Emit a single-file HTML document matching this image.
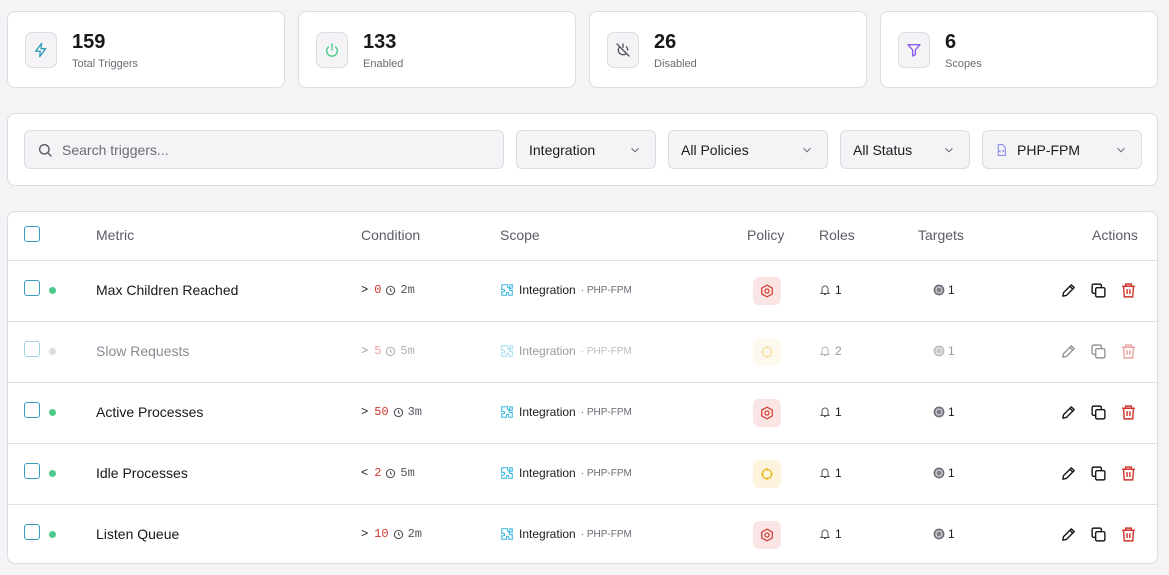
<!DOCTYPE html>
<html><head><meta charset="utf-8"><style>
*{box-sizing:border-box;margin:0;padding:0}
body{width:1169px;height:575px;background:#f4f4f6;font-family:"Liberation Sans",sans-serif;color:#1b1b1f;position:relative;overflow:hidden}
.card{position:absolute;top:11px;height:77px;width:278px;background:#fff;border:1px solid #dcdce2;border-radius:8px}
.ib{position:absolute;left:17px;top:20px;width:32px;height:36px;border:1px solid #dcdce2;border-radius:7px;background:#f4f4f6;display:flex;align-items:center;justify-content:center}
.num{position:absolute;left:64px;top:19px;font-size:20px;font-weight:bold;color:#18181b}
.lbl{position:absolute;left:64px;top:46px;font-size:11px;color:#6b6b76}
.panel{position:absolute;left:7px;top:113px;width:1151px;height:73px;background:#fff;border:1px solid #dcdce2;border-radius:8px}
.inp{position:absolute;top:130px;height:39px;background:#f4f4f6;border:1px solid #dcdce2;border-radius:6px;font-size:14px;color:#1b1b1f;display:flex;align-items:center;padding-left:12px}
.chev{position:absolute;right:13px;top:12px}
.table{position:absolute;left:7px;top:211px;width:1151px;height:353px;background:#fff;border:1px solid #dcdce2;border-radius:8px;overflow:hidden}
.th{position:absolute;top:15px;font-size:14px;color:#5b5b66}
.row{position:absolute;left:0;width:1151px;height:61px;border-top:1px solid #e0e0e6}
.cb{position:absolute;left:16px;top:19px;width:16px;height:16px;border:1.5px solid #3a9bbd;border-radius:3px}
.dot{position:absolute;left:41px;top:26px;width:7px;height:7px;border-radius:50%;background:#4cc98a}
.name{position:absolute;left:88px;top:21px;font-size:14px;color:#18181b}
.cond{position:absolute;left:353px;top:22px;font-family:"Liberation Mono",monospace;font-size:12px;display:flex;align-items:center;gap:4px;color:#1b1b1f}
.cond .v{color:#d1352b;margin-left:2px}
.cond .t{color:#55555f}
.scope{position:absolute;left:492px;top:22px;font-size:12px;display:flex;align-items:center;gap:5px}
.scope .s{font-size:10px;color:#6b6b76}
.pol{position:absolute;left:745px;top:16px;width:28px;height:28px;border-radius:6px;display:flex;align-items:center;justify-content:center}
.roles{position:absolute;left:811px;top:22px;font-size:12px;display:flex;align-items:center;gap:4px}
.tg{position:absolute;left:925px;top:22px;font-size:12px;display:flex;align-items:center;gap:3px}
.act{position:absolute;left:1052px;top:21px;display:flex;gap:13px}
.dim{opacity:.45}
</style></head><body>

<div class="card" style="left:7px"><div class="ib"><svg width="16" height="16" viewBox="0 0 24 24" fill="none" stroke="#3a9bbd" stroke-width="2" stroke-linejoin="round"><path d="M13 2L4 14h7l-1 8 9-12h-7z"/></svg></div><div class="num">159</div><div class="lbl">Total Triggers</div></div>
<div class="card" style="left:298px"><div class="ib"><svg width="16" height="16" viewBox="0 0 24 24" fill="none" stroke="#4cc98a" stroke-width="2" stroke-linecap="round"><path d="M12 3v9"/><path d="M6.5 7.5a8 8 0 1 0 11 0"/></svg></div><div class="num">133</div><div class="lbl">Enabled</div></div>
<div class="card" style="left:589px"><div class="ib"><svg width="16" height="16" viewBox="0 0 24 24" fill="none" stroke="#55555f" stroke-width="2" stroke-linecap="round"><path d="M3 3l18 18"/><path d="M12 3v5"/><path d="M7 7a7 7 0 1 0 10 10"/><path d="M17 7a7 7 0 0 1 2 5"/></svg></div><div class="num">26</div><div class="lbl">Disabled</div></div>
<div class="card" style="left:880px"><div class="ib"><svg width="16" height="16" viewBox="0 0 24 24" fill="none" stroke="#8b5cf6" stroke-width="2" stroke-linejoin="round"><path d="M3 4h18l-7 8v7l-4 2v-9z"/></svg></div><div class="num">6</div><div class="lbl">Scopes</div></div>

<div class="panel"></div>
<div class="inp" style="left:24px;width:480px;color:#6b6b76"><svg width="16" height="16" viewBox="0 0 24 24" fill="none" stroke="#55555f" stroke-width="2" stroke-linecap="round" style="margin-right:9px"><circle cx="11" cy="11" r="7"/><path d="M16 16l5 5"/></svg>Search triggers...</div>
<div class="inp" style="left:516px;width:140px">Integration<svg class="chev" width="14" height="14" viewBox="0 0 24 24" fill="none" stroke="#6b6b76" stroke-width="1.8"><path d="M6 9l6 6 6-6"/></svg></div>
<div class="inp" style="left:668px;width:160px">All Policies<svg class="chev" width="14" height="14" viewBox="0 0 24 24" fill="none" stroke="#6b6b76" stroke-width="1.8"><path d="M6 9l6 6 6-6"/></svg></div>
<div class="inp" style="left:840px;width:130px">All Status<svg class="chev" width="14" height="14" viewBox="0 0 24 24" fill="none" stroke="#6b6b76" stroke-width="1.8"><path d="M6 9l6 6 6-6"/></svg></div>
<div class="inp" style="left:982px;width:160px"><svg width="13" height="14" viewBox="0 0 24 24" fill="none" stroke="#8b8bf0" stroke-width="2" style="margin-right:9px"><path d="M6 2h8l5 5v15H6z"/><path d="M10 12l-2 2 2 2M14 12l2 2-2 2"/></svg>PHP-FPM<svg class="chev" width="14" height="14" viewBox="0 0 24 24" fill="none" stroke="#6b6b76" stroke-width="1.8"><path d="M6 9l6 6 6-6"/></svg></div>

<div class="table">
<div class="cb" style="top:14px"></div>
<div class="th" style="left:88px">Metric</div>
<div class="th" style="left:353px">Condition</div>
<div class="th" style="left:492px">Scope</div>
<div class="th" style="left:739px">Policy</div>
<div class="th" style="left:811px">Roles</div>
<div class="th" style="left:910px">Targets</div>
<div class="th" style="left:1084px">Actions</div>

<div class="row" style="top:48px">
<div class="cb"></div><div class="dot"></div><div class="name">Max Children Reached</div>
<div class="cond">&gt;<span class="v">0</span><svg width="11" height="11" viewBox="0 0 24 24" fill="none" stroke="#55555f" stroke-width="2.4"><circle cx="12" cy="12" r="9"/><path d="M12 7v5l3 2"/></svg><span class="t">2m</span></div>
<div class="scope"><svg width="14" height="14" viewBox="0 0 24 24" fill="none" stroke="#38b6e0" stroke-width="1.8"><path d="M9 3h4v3a2 2 0 1 0 4 0V3h4v6h-3a2 2 0 1 0 0 4h3v8h-6v-3a2 2 0 1 0-4 0v3H3v-6h3a2 2 0 1 0 0-4H3V3h6z"/></svg>Integration <span class="s">· PHP-FPM</span></div>
<div class="pol" style="background:#f9e5e3"><svg width="14" height="14" viewBox="0 0 24 24" fill="none" stroke="#d1352b" stroke-width="2"><path d="M12 2l9 5v10l-9 5-9-5V7z"/><circle cx="12" cy="12" r="3.5"/></svg></div>
<div class="roles"><svg width="12" height="12" viewBox="0 0 24 24" fill="none" stroke="#55555f" stroke-width="2"><path d="M6 17V10a6 6 0 0 1 12 0v7l2 2H4z"/><path d="M10 21h4"/></svg>1</div>
<div class="tg"><svg width="12" height="12" viewBox="0 0 24 24" fill="#8a8a95" stroke="#55555f" stroke-width="1.5"><circle cx="12" cy="12" r="10"/><circle cx="12" cy="12" r="6" fill="none" stroke="#eee"/><circle cx="12" cy="12" r="2" fill="#eee"/></svg>1</div>
<div class="act"><svg width="17" height="17" viewBox="0 0 24 24" fill="none" stroke="#18181b" stroke-width="2" stroke-linejoin="round"><path d="M4 20l1-5L16 4l4 4L9 19z"/><path d="M14 6l4 4"/></svg><svg width="17" height="17" viewBox="0 0 24 24" fill="none" stroke="#18181b" stroke-width="2"><rect x="8" y="8" width="13" height="13" rx="2"/><path d="M16 8V5a2 2 0 0 0-2-2H5a2 2 0 0 0-2 2v9a2 2 0 0 0 2 2h3"/></svg><svg width="17" height="17" viewBox="0 0 24 24" fill="none" stroke="#d1352b" stroke-width="2"><path d="M3 6h18M8 6V3h8v3M5 6l1 15h12l1-15M10 10v7M14 10v7"/></svg></div>
</div>

<div class="row" style="top:109px">
<div class="cb dim"></div><div class="dot" style="background:#dcdce2"></div><div class="name" style="color:#8a8a95">Slow Requests</div>
<div class="cond dim">&gt;<span class="v">5</span><svg width="11" height="11" viewBox="0 0 24 24" fill="none" stroke="#55555f" stroke-width="2.4"><circle cx="12" cy="12" r="9"/><path d="M12 7v5l3 2"/></svg><span class="t">5m</span></div>
<div class="scope dim"><svg width="14" height="14" viewBox="0 0 24 24" fill="none" stroke="#38b6e0" stroke-width="1.8"><path d="M9 3h4v3a2 2 0 1 0 4 0V3h4v6h-3a2 2 0 1 0 0 4h3v8h-6v-3a2 2 0 1 0-4 0v3H3v-6h3a2 2 0 1 0 0-4H3V3h6z"/></svg>Integration <span class="s">· PHP-FPM</span></div>
<div class="pol dim" style="background:#fdf3dc"><svg width="14" height="14" viewBox="0 0 24 24" fill="none" stroke="#eab308" stroke-width="2"><circle cx="12" cy="12" r="8"/><path d="M12 2v4M12 18v4M2 12h4M18 12h4"/></svg></div>
<div class="roles dim"><svg width="12" height="12" viewBox="0 0 24 24" fill="none" stroke="#55555f" stroke-width="2"><path d="M6 17V10a6 6 0 0 1 12 0v7l2 2H4z"/><path d="M10 21h4"/></svg>2</div>
<div class="tg dim"><svg width="12" height="12" viewBox="0 0 24 24" fill="#8a8a95" stroke="#55555f" stroke-width="1.5"><circle cx="12" cy="12" r="10"/><circle cx="12" cy="12" r="6" fill="none" stroke="#eee"/><circle cx="12" cy="12" r="2" fill="#eee"/></svg>1</div>
<div class="act dim"><svg width="17" height="17" viewBox="0 0 24 24" fill="none" stroke="#18181b" stroke-width="2" stroke-linejoin="round"><path d="M4 20l1-5L16 4l4 4L9 19z"/><path d="M14 6l4 4"/></svg><svg width="17" height="17" viewBox="0 0 24 24" fill="none" stroke="#18181b" stroke-width="2"><rect x="8" y="8" width="13" height="13" rx="2"/><path d="M16 8V5a2 2 0 0 0-2-2H5a2 2 0 0 0-2 2v9a2 2 0 0 0 2 2h3"/></svg><svg width="17" height="17" viewBox="0 0 24 24" fill="none" stroke="#d1352b" stroke-width="2"><path d="M3 6h18M8 6V3h8v3M5 6l1 15h12l1-15M10 10v7M14 10v7"/></svg></div>
</div>

<div class="row" style="top:170px">
<div class="cb"></div><div class="dot"></div><div class="name">Active Processes</div>
<div class="cond">&gt;<span class="v">50</span><svg width="11" height="11" viewBox="0 0 24 24" fill="none" stroke="#55555f" stroke-width="2.4"><circle cx="12" cy="12" r="9"/><path d="M12 7v5l3 2"/></svg><span class="t">3m</span></div>
<div class="scope"><svg width="14" height="14" viewBox="0 0 24 24" fill="none" stroke="#38b6e0" stroke-width="1.8"><path d="M9 3h4v3a2 2 0 1 0 4 0V3h4v6h-3a2 2 0 1 0 0 4h3v8h-6v-3a2 2 0 1 0-4 0v3H3v-6h3a2 2 0 1 0 0-4H3V3h6z"/></svg>Integration <span class="s">· PHP-FPM</span></div>
<div class="pol" style="background:#f9e5e3"><svg width="14" height="14" viewBox="0 0 24 24" fill="none" stroke="#d1352b" stroke-width="2"><path d="M12 2l9 5v10l-9 5-9-5V7z"/><circle cx="12" cy="12" r="3.5"/></svg></div>
<div class="roles"><svg width="12" height="12" viewBox="0 0 24 24" fill="none" stroke="#55555f" stroke-width="2"><path d="M6 17V10a6 6 0 0 1 12 0v7l2 2H4z"/><path d="M10 21h4"/></svg>1</div>
<div class="tg"><svg width="12" height="12" viewBox="0 0 24 24" fill="#8a8a95" stroke="#55555f" stroke-width="1.5"><circle cx="12" cy="12" r="10"/><circle cx="12" cy="12" r="6" fill="none" stroke="#eee"/><circle cx="12" cy="12" r="2" fill="#eee"/></svg>1</div>
<div class="act"><svg width="17" height="17" viewBox="0 0 24 24" fill="none" stroke="#18181b" stroke-width="2" stroke-linejoin="round"><path d="M4 20l1-5L16 4l4 4L9 19z"/><path d="M14 6l4 4"/></svg><svg width="17" height="17" viewBox="0 0 24 24" fill="none" stroke="#18181b" stroke-width="2"><rect x="8" y="8" width="13" height="13" rx="2"/><path d="M16 8V5a2 2 0 0 0-2-2H5a2 2 0 0 0-2 2v9a2 2 0 0 0 2 2h3"/></svg><svg width="17" height="17" viewBox="0 0 24 24" fill="none" stroke="#d1352b" stroke-width="2"><path d="M3 6h18M8 6V3h8v3M5 6l1 15h12l1-15M10 10v7M14 10v7"/></svg></div>
</div>

<div class="row" style="top:231px">
<div class="cb"></div><div class="dot"></div><div class="name">Idle Processes</div>
<div class="cond">&lt;<span class="v">2</span><svg width="11" height="11" viewBox="0 0 24 24" fill="none" stroke="#55555f" stroke-width="2.4"><circle cx="12" cy="12" r="9"/><path d="M12 7v5l3 2"/></svg><span class="t">5m</span></div>
<div class="scope"><svg width="14" height="14" viewBox="0 0 24 24" fill="none" stroke="#38b6e0" stroke-width="1.8"><path d="M9 3h4v3a2 2 0 1 0 4 0V3h4v6h-3a2 2 0 1 0 0 4h3v8h-6v-3a2 2 0 1 0-4 0v3H3v-6h3a2 2 0 1 0 0-4H3V3h6z"/></svg>Integration <span class="s">· PHP-FPM</span></div>
<div class="pol" style="background:#fdf3dc"><svg width="14" height="14" viewBox="0 0 24 24" fill="none" stroke="#eab308" stroke-width="2"><circle cx="12" cy="12" r="8"/><path d="M12 2v4M12 18v4M2 12h4M18 12h4"/></svg></div>
<div class="roles"><svg width="12" height="12" viewBox="0 0 24 24" fill="none" stroke="#55555f" stroke-width="2"><path d="M6 17V10a6 6 0 0 1 12 0v7l2 2H4z"/><path d="M10 21h4"/></svg>1</div>
<div class="tg"><svg width="12" height="12" viewBox="0 0 24 24" fill="#8a8a95" stroke="#55555f" stroke-width="1.5"><circle cx="12" cy="12" r="10"/><circle cx="12" cy="12" r="6" fill="none" stroke="#eee"/><circle cx="12" cy="12" r="2" fill="#eee"/></svg>1</div>
<div class="act"><svg width="17" height="17" viewBox="0 0 24 24" fill="none" stroke="#18181b" stroke-width="2" stroke-linejoin="round"><path d="M4 20l1-5L16 4l4 4L9 19z"/><path d="M14 6l4 4"/></svg><svg width="17" height="17" viewBox="0 0 24 24" fill="none" stroke="#18181b" stroke-width="2"><rect x="8" y="8" width="13" height="13" rx="2"/><path d="M16 8V5a2 2 0 0 0-2-2H5a2 2 0 0 0-2 2v9a2 2 0 0 0 2 2h3"/></svg><svg width="17" height="17" viewBox="0 0 24 24" fill="none" stroke="#d1352b" stroke-width="2"><path d="M3 6h18M8 6V3h8v3M5 6l1 15h12l1-15M10 10v7M14 10v7"/></svg></div>
</div>

<div class="row" style="top:292px">
<div class="cb"></div><div class="dot"></div><div class="name">Listen Queue</div>
<div class="cond">&gt;<span class="v">10</span><svg width="11" height="11" viewBox="0 0 24 24" fill="none" stroke="#55555f" stroke-width="2.4"><circle cx="12" cy="12" r="9"/><path d="M12 7v5l3 2"/></svg><span class="t">2m</span></div>
<div class="scope"><svg width="14" height="14" viewBox="0 0 24 24" fill="none" stroke="#38b6e0" stroke-width="1.8"><path d="M9 3h4v3a2 2 0 1 0 4 0V3h4v6h-3a2 2 0 1 0 0 4h3v8h-6v-3a2 2 0 1 0-4 0v3H3v-6h3a2 2 0 1 0 0-4H3V3h6z"/></svg>Integration <span class="s">· PHP-FPM</span></div>
<div class="pol" style="background:#f9e5e3"><svg width="14" height="14" viewBox="0 0 24 24" fill="none" stroke="#d1352b" stroke-width="2"><path d="M12 2l9 5v10l-9 5-9-5V7z"/><circle cx="12" cy="12" r="3.5"/></svg></div>
<div class="roles"><svg width="12" height="12" viewBox="0 0 24 24" fill="none" stroke="#55555f" stroke-width="2"><path d="M6 17V10a6 6 0 0 1 12 0v7l2 2H4z"/><path d="M10 21h4"/></svg>1</div>
<div class="tg"><svg width="12" height="12" viewBox="0 0 24 24" fill="#8a8a95" stroke="#55555f" stroke-width="1.5"><circle cx="12" cy="12" r="10"/><circle cx="12" cy="12" r="6" fill="none" stroke="#eee"/><circle cx="12" cy="12" r="2" fill="#eee"/></svg>1</div>
<div class="act"><svg width="17" height="17" viewBox="0 0 24 24" fill="none" stroke="#18181b" stroke-width="2" stroke-linejoin="round"><path d="M4 20l1-5L16 4l4 4L9 19z"/><path d="M14 6l4 4"/></svg><svg width="17" height="17" viewBox="0 0 24 24" fill="none" stroke="#18181b" stroke-width="2"><rect x="8" y="8" width="13" height="13" rx="2"/><path d="M16 8V5a2 2 0 0 0-2-2H5a2 2 0 0 0-2 2v9a2 2 0 0 0 2 2h3"/></svg><svg width="17" height="17" viewBox="0 0 24 24" fill="none" stroke="#d1352b" stroke-width="2"><path d="M3 6h18M8 6V3h8v3M5 6l1 15h12l1-15M10 10v7M14 10v7"/></svg></div>
</div>
</div>
</body></html>
